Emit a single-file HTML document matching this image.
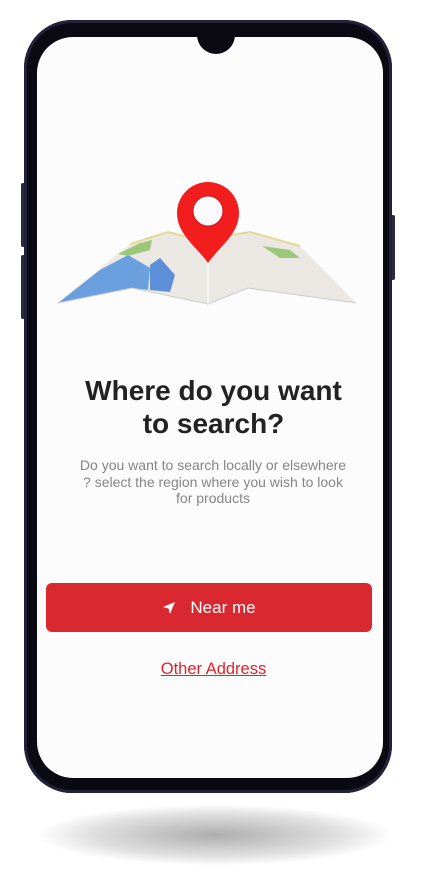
<!DOCTYPE html>
<html><head><meta charset="utf-8"><style>
html,body{margin:0;padding:0;width:427px;height:887px;background:#fff;overflow:hidden;font-family:"Liberation Sans",sans-serif}
.shadow{position:absolute;left:40px;top:805px;width:350px;height:60px;border-radius:50%;background:radial-gradient(ellipse at center,rgba(0,0,0,.32) 0%,rgba(0,0,0,.12) 50%,rgba(0,0,0,0) 72%)}
.phone{position:absolute;left:24px;top:20px;width:368px;height:773px;border-radius:48px;background:#0b0a12;box-shadow:inset 0 0 0 3px #23223a}
.btnside{position:absolute;background:#2a2940;width:4px;border-radius:2px}
.screen{position:absolute;left:37px;top:37px;width:346px;height:741px;border-radius:36px;background:#fcfcfc;overflow:hidden}
.notch{position:absolute;left:197px;top:30px;width:38px;height:24px;border-radius:0 0 19px 19px;background:#0b0a12}
h1{position:absolute;left:0;top:374px;width:427px;margin:0;text-align:center;font-size:28px;line-height:33px;font-weight:bold;color:#222}
p{position:absolute;left:13px;top:457px;width:400px;margin:0;text-align:center;font-size:14px;line-height:16.5px;color:#858585;white-space:nowrap}
.btn{position:absolute;left:46px;top:583px;width:326px;height:49px;border-radius:6px;background:#d9282f;color:#fff;font-size:17px;display:flex;align-items:center;justify-content:center}
.link{position:absolute;left:0;top:660px;width:427px;text-align:center;color:#e8202a;font-size:16.5px;text-decoration:underline}
</style></head><body>
<div class="shadow"></div>
<div class="btnside" style="left:21px;top:183px;height:64px"></div>
<div class="btnside" style="left:21px;top:255px;height:64px"></div>
<div class="btnside" style="left:391px;top:215px;height:65px"></div>
<div class="phone"></div>
<div class="screen"></div>
<div class="notch"></div>
<svg style="position:absolute;left:0;top:0" width="427" height="320">
<polygon points="58,303 130,244 168,232 200,240 250,232 300,246 356,303 248,288 208,304 132,288" fill="#ebe8e3"/>
<polygon points="58,303 100,270 128,255 140,262 150,268 148,290 132,288" fill="#6a9fe0"/>
<polygon points="150,265 160,258 175,275 170,292 150,290" fill="#5c8fd8"/>
<polygon points="118,254 140,243 152,240 150,250 128,256" fill="#9cc77a"/>
<polygon points="262,246 290,250 300,258 280,258" fill="#9cc77a"/>
<polyline points="130,244 168,232 200,240 250,232 300,246" fill="none" stroke="#e6d890" stroke-width="2"/>
<polyline points="58,303 132,288 208,304 248,288 356,303" fill="none" stroke="#ccc" stroke-width="1"/>
<line x1="208" y1="260" x2="208" y2="304" stroke="#fff" stroke-width="1"/>
<path d="M208,263 C196,246 177,234 177,213 A31,31 0 0 1 239,213 C239,234 220,246 208,263Z" fill="#f21d1d"/>
<circle cx="208" cy="211" r="15" fill="#fbfbfb" stroke="#d01515" stroke-width="1"/>
</svg>
<h1>Where do you want<br>to search?</h1>
<p>Do you want to search locally or elsewhere<br>? select the region where you wish to look<br>for products</p>
<div class="btn"><svg width="14" height="14" viewBox="0 0 14 14" style="margin-right:14px"><path d="M13,1 L1,6 L6.5,7.5 L8,13Z" fill="#fff"/></svg>Near me</div>
<div class="link">Other Address</div>
</body></html>
